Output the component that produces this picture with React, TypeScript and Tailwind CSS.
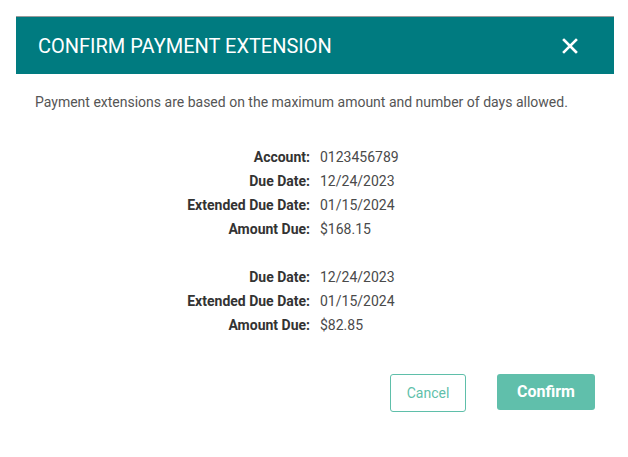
import React from "react";

const Row = ({ label, value }: { label: string; value: string }) => (
  <div className="flex h-6 items-center">
    <div className="w-[320px] pr-[10px] text-right font-bold text-[#333]">{label}</div>
    <div className="text-[#4a4a4a]">{value}</div>
  </div>
);

export default function App() {
  return (
    <div className="w-[628px] h-[457px] bg-white font-['Roboto',sans-serif]">
      <div className="pt-4 pl-4 pr-[14px]">
        <div className="border-t border-[#9a9a9a] bg-[#007b80] h-[58px] flex items-center justify-between pl-[22px] pr-[36px]">
          <h1 className="text-white text-[20px] font-normal">CONFIRM PAYMENT EXTENSION</h1>
          <svg width="16" height="16" viewBox="0 0 16 16" className="mt-[1px]">
            <path d="M2 2 L14 14 M14 2 L2 14" stroke="white" strokeWidth="2.6" strokeLinecap="square" />
          </svg>
        </div>
      </div>
      <p className="pl-[35px] mt-[18px] text-[14px] text-[#555]">
        Payment extensions are based on the maximum amount and number of days allowed.
      </p>
      <div className="mt-[32px] text-[14px]">
        <Row label="Account:" value="0123456789" />
        <Row label="Due Date:" value="12/24/2023" />
        <Row label="Extended Due Date:" value="01/15/2024" />
        <Row label="Amount Due:" value="$168.15" />
        <div className="h-6" />
        <Row label="Due Date:" value="12/24/2023" />
        <Row label="Extended Due Date:" value="01/15/2024" />
        <Row label="Amount Due:" value="$82.85" />
      </div>
      <div className="flex justify-end items-start gap-[31px] pr-[33px] mt-[37px]">
        <button className="w-[76px] h-[38px] border border-[#5fbfaa] rounded-[3px] text-[#5fbfaa] text-[14px]">
          Cancel
        </button>
        <button className="w-[98px] h-[36px] bg-[#60bfab] rounded-[3px] text-white text-[16px] font-bold">
          Confirm
        </button>
      </div>
    </div>
  );
}
